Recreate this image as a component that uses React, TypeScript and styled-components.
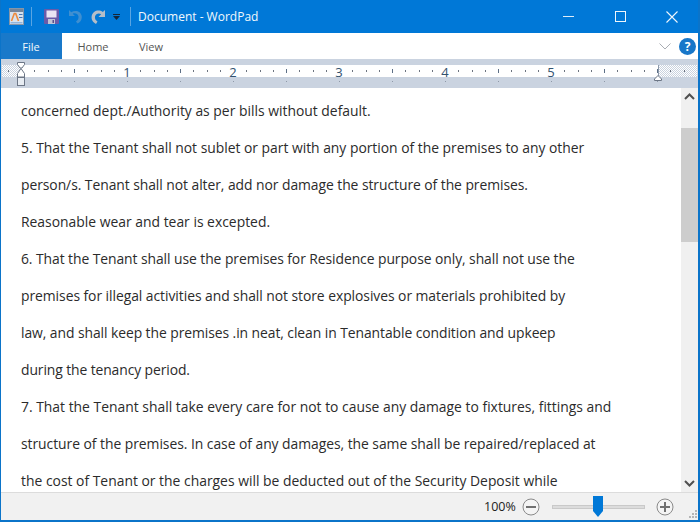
import React from "react";
import styled, { createGlobalStyle } from "styled-components";

const Global = createGlobalStyle`
  html, body { margin: 0; padding: 0; background: #fff; }
  body { font-family: "Open Sans", "Noto Sans", sans-serif; }
`;
const Win = styled.div`
  width: 700px; height: 522px; display: flex; flex-direction: column;
  box-sizing: border-box; border: solid #0b74c9; border-width: 0 2px 2px 1px; overflow: hidden;
`;
const TitleBar = styled.div`
  height: 33px; flex: none; background: #0078d7; display: flex; align-items: center; color: #fff;
  margin: 0 -2px 0 -1px; padding: 0 2px 0 9px;
`;
const QuickIcon = styled.svg<{ $ml?: number }>`
  flex: none; display: block; margin-left: ${p => p.$ml ?? 0}px;
`;
const Sep = styled.div<{ $ml: number }>`
  width: 1px; height: 19px; background: #5aa5e2; flex: none; margin-left: ${p => p.$ml}px;
`;
const QuickGroup = styled.div`
  display: flex; align-items: center;
`;
const Title = styled.div`
  font-size: 12px; margin-left: 7px; white-space: nowrap; color: #f2f8fd; flex: 1;
`;
const WinButton = styled.div`
  width: 52px; height: 33px; display: flex; align-items: center; justify-content: center; flex: none;
`;
const TabsRow = styled.div`
  height: 26px; flex: none; display: flex; align-items: stretch; background: #fff;
  margin-left: -1px; padding-right: 2px;
`;
const FileTab = styled.div`
  width: 62px; background: #1979ca; color: #f3f8fc; font-size: 11px;
  display: flex; align-items: center; justify-content: center; flex: none;
`;
const Tab = styled.div<{ $w: number }>`
  width: ${p => p.$w}px; color: #555; font-size: 11px; display: flex; align-items: center; justify-content: center; flex: none;
`;
const Spacer = styled.div`flex: 1;`;
const RibbonIcons = styled.div`
  display: flex; align-items: center; gap: 8px;
`;
const RulerBand = styled.div`
  height: 29px; flex: none; background: #cad3e0; padding-top: 2px; box-sizing: border-box;
`;
const RulerSvg = styled.svg`
  display: block;
`;
const Body = styled.div`
  flex: 1; min-height: 0; display: flex; background: #fff;
`;
const Page = styled.div`
  flex: 1; min-width: 0; overflow: hidden; padding: 4px 0 0 20px;
`;
const Line = styled.div<{ $ls: number }>`
  height: 37px; line-height: 37px; font-size: 13.9px; color: #2b2b2b; white-space: nowrap;
  letter-spacing: ${p => p.$ls}px;
`;
const Scroll = styled.div`
  width: 17px; flex: none; display: flex; flex-direction: column; background: #f0f0f0;
`;
const ScrollBtn = styled.div`
  height: 17px; display: flex; align-items: center; justify-content: center; flex: none;
`;
const ScrollGap = styled.div<{ $h?: number }>`
  ${p => p.$h ? `height: ${p.$h}px; flex: none;` : "flex: 1;"}
`;
const Thumb = styled.div`
  height: 114px; flex: none; background: #cdcdcd;
`;
const Status = styled.div`
  height: 28px; flex: none; background: #f1f1f1; border-top: 1px solid #dcdcdc; box-sizing: border-box;
  display: flex; align-items: center; position: relative; padding-left: 483px;
`;
const Zoom = styled.div`
  font-size: 12.5px; color: #222; width: 37px; flex: none;
`;
const RoundBtn = styled.svg<{ $ml?: number }>`
  flex: none; margin-left: ${p => p.$ml ?? 0}px;
`;
const SliderWrap = styled.div`
  width: 93px; height: 21px; margin: 0 11px 0 12px; position: relative; flex: none; display: flex; align-items: center;
`;
const Track = styled.div`
  width: 100%; height: 4px; background: #dcdcdc; border: 1px solid #c9c9c9; box-sizing: border-box;
`;
const Knob = styled.svg`
  position: absolute; left: 40px; top: 0;
`;
const Grip = styled.svg`
  position: absolute; right: 0; bottom: 1px;
`;

const lines: [string, number][] = [
  ["concerned dept./Authority as per bills without default.", 0],
  ["5. That the Tenant shall not sublet or part with any portion of the premises to any other", -0.02],
  ["person/s. Tenant shall not alter, add nor damage the structure of the premises.", -0.06],
  ["Reasonable wear and tear is excepted.", 0],
  ["6. That the Tenant shall use the premises for Residence purpose only, shall not use the", -0.07],
  ["premises for illegal activities and shall not store explosives or materials prohibited by", -0.055],
  ["law, and shall keep the premises .in neat, clean in Tenantable condition and upkeep", -0.07],
  ["during the tenancy period.", -0.1],
  ["7. That the Tenant shall take every care for not to cause any damage to fixtures, fittings and", 0],
  ["structure of the premises. In case of any damages, the same shall be repaired/replaced at", -0.045],
  ["the cost of Tenant or the charges will be deducted out of the Security Deposit while", 0],
];

const RulerArt = () => {
  const ticks: React.ReactElement[] = [];
  const start = 20, inch = 106;
  for (let i = -1; i < 52; i++) {
    const x = Math.round(start + (i * inch) / 8);
    if (x < 2 || x > 694) continue;
    if (i % 8 === 0 && i > 0 && i < 48) {
      ticks.push(<rect key={`d${i}`} x={x} y={20} width={1} height={1} fill="#8f99a8" />);
      continue;
    }
    if (i === 0) continue;
    if (i % 4 === 0) {
      ticks.push(<rect key={i} x={x} y={8} width={1} height={4} fill="#5d6f86" />);
      ticks.push(<rect key={`d${i}`} x={x} y={20} width={1} height={1} fill="#8f99a8" />);
    } else ticks.push(<rect key={i} x={x} y={9} width={1} height={2} fill="#6d7480" />);
  }
  return (
    <RulerSvg width={696} height={27} viewBox="0 0 696 27">
      <defs>
        <pattern id="hatch" width="2" height="2" patternUnits="userSpaceOnUse">
          <rect width="2" height="2" fill="#fff" />
          <rect width="1" height="1" fill="#c9d2df" />
          <rect x="1" y="1" width="1" height="1" fill="#c9d2df" />
        </pattern>
      </defs>
      <rect x={1} y={4} width={695} height={12} fill="url(#hatch)" />
      <rect x={21} y={4} width={636} height={12} fill="#fff" />
      {ticks}
      {[1, 2, 3, 4, 5].map(n => (
        <text key={n} x={20 + n * inch} y={16} textAnchor="middle" fontSize={13} fontFamily="Open Sans, sans-serif" fill="#33526f">{n}</text>
      ))}
      <rect x={657} y={4} width={1} height={12} fill="#8d9aac" />
      <path d="M16.500 1.500h7v2l-2.500 3.500h-2l-2.500-3.500z" fill="#fff" stroke="#6c7686" />
      <path d="M20 7.500l3.500 5v3.500h-7v-3.500z" fill="#fff" stroke="#6c7686" />
      <rect x={16.500} y={16.500} width={7} height={8} fill="#e8edf3" stroke="#6c7686" />
      <path d="M653.500 19.500v-1.500l3.500-3.500 3.500 3.500v1.500z" fill="#fff" stroke="#6c7686" />
    </RulerSvg>
  );
};

export default function App() {
  return (
    <>
      <Global />
      <Win>
        <TitleBar>
          <QuickGroup>
            <QuickIcon width={15} height={17} viewBox="0 0 15 17">
              <rect x={0.5} y={0.5} width={14} height={16} fill="#d6e2ee" stroke="#8696a8" />
              <rect x={1} y={1} width={13} height={3} fill="#74859a" />
              <path d="M2.500 13l2.800-7.500h1.400L9.500 13" fill="none" stroke="#ec8a3c" strokeWidth={1.6} />
              <rect x={10} y={6} width={3.500} height={1} fill="#4a78b5" />
              <rect x={10} y={9} width={3.500} height={1} fill="#4a78b5" />
              <rect x={1.500} y={14} width={12} height={1.500} fill="#8fb4dd" />
            </QuickIcon>
            <Sep $ml={7} />
            <QuickIcon $ml={12} width={15} height={15} viewBox="0 0 15 15">
              <rect width={15} height={15} rx={1} fill="#6a5aa8" />
              <rect x={2.500} y={1.500} width={10} height={7} fill="#e9e4f3" />
              <rect x={4} y={10} width={7} height={5} fill="#c0c4d6" />
              <rect x={8.500} y={11} width={1.500} height={3} fill="#5a4f8e" />
            </QuickIcon>
            <QuickIcon $ml={9} width={15} height={15} viewBox="0 0 15 15">
              <path d="M1 1v6h6L4.700 4.800C6.500 3.700 10 4.500 10.500 7.500c.3 2.200-.8 4-2.500 5l1.500 2c3-1.300 4.700-4.300 4.200-7.500C13 2.500 7.500.5 3.200 3.300z" fill="#3f8fd0" />
            </QuickIcon>
            <QuickIcon $ml={7} width={16} height={16} viewBox="0 0 16 16">
              <path d="M15 1v7H8.500l2.600-2.700C9 3.700 5.700 4.700 5 7.500c-.4 2.200.7 4 2.500 5L6 15c-3-1.500-5-4.500-4.300-8C2.700 2 8.500 0 12.800 3z" fill="#b5bec8" />
            </QuickIcon>
            <QuickIcon $ml={7} width={7} height={6} viewBox="0 0 7 6">
              <rect width={7} height={1} fill="#14263a" />
              <path d="M0 2h7L3.500 6z" fill="#14263a" />
            </QuickIcon>
            <Sep $ml={10} />
          </QuickGroup>
          <Title>Document - WordPad</Title>
          <WinButton>
            <svg width={11} height={1} viewBox="0 0 11 1"><rect width={11} height={1} fill="#dcecf9" /></svg>
          </WinButton>
          <WinButton>
            <svg width={11} height={11} viewBox="0 0 11 11"><rect x={0.5} y={0.5} width={10} height={10} fill="none" stroke="#eef6fc" /></svg>
          </WinButton>
          <WinButton>
            <svg width={12} height={12} viewBox="0 0 12 12"><path d="M.5.5l11 11M11.500.5l-11 11" stroke="#eef6fc" strokeWidth={1.1} /></svg>
          </WinButton>
        </TitleBar>
        <TabsRow>
          <FileTab>File</FileTab>
          <Tab $w={62}>Home</Tab>
          <Tab $w={54}>View</Tab>
          <Spacer />
          <RibbonIcons>
            <svg width={12} height={7} viewBox="0 0 12 7"><path d="M.5.5L6 6l5.500-5.500" fill="none" stroke="#a9adb3" /></svg>
            <svg width={17} height={17} viewBox="0 0 17 17"><circle cx={8.500} cy={8.500} r={8.500} fill="#1877c9" /><text x={8.500} y={13} textAnchor="middle" fontSize={12} fontWeight={700} fontFamily="Open Sans, sans-serif" fill="#fff">?</text></svg>
          </RibbonIcons>
        </TabsRow>
        <RulerBand><RulerArt /></RulerBand>
        <Body>
          <Page>{lines.map(([l, ls]) => <Line key={l} $ls={ls}>{l}</Line>)}</Page>
          <Scroll>
            <ScrollBtn>
              <svg width={11} height={7} viewBox="0 0 11 7"><path d="M1 6l4.500-4.500L10 6" fill="none" stroke="#505050" strokeWidth={2} /></svg>
            </ScrollBtn>
            <ScrollGap $h={23} />
            <Thumb />
            <ScrollGap />
            <ScrollBtn>
              <svg width={11} height={7} viewBox="0 0 11 7"><path d="M1 1l4.500 4.500L10 1" fill="none" stroke="#505050" strokeWidth={2} /></svg>
            </ScrollBtn>
          </Scroll>
        </Body>
        <Status>
          <Zoom>100%</Zoom>
          <RoundBtn $ml={1} width={18} height={18} viewBox="0 0 18 18"><circle cx={9} cy={9} r={8} fill="#f4f4f4" stroke="#8a8a8a" /><rect x={4} y={8} width={10} height={2} fill="#707070" /></RoundBtn>
          <SliderWrap>
            <Track />
            <Knob width={12} height={21} viewBox="0 0 12 21"><path d="M1 0h10v15l-5 6-5-6z" fill="#0078d7" /></Knob>
          </SliderWrap>
          <RoundBtn width={18} height={18} viewBox="0 0 18 18"><circle cx={9} cy={9} r={8} fill="#f4f4f4" stroke="#8a8a8a" /><rect x={4} y={8} width={10} height={2} fill="#707070" /><rect x={8} y={4} width={2} height={10} fill="#707070" /></RoundBtn>
          <Grip width={9} height={9} viewBox="0 0 9 9"><g fill="#b5b5b5"><rect x={6} y={0} width={2} height={2} /><rect x={3} y={3} width={2} height={2} /><rect x={6} y={3} width={2} height={2} /><rect x={0} y={6} width={2} height={2} /><rect x={3} y={6} width={2} height={2} /><rect x={6} y={6} width={2} height={2} /></g></Grip>
        </Status>
      </Win>
    </>
  );
}
